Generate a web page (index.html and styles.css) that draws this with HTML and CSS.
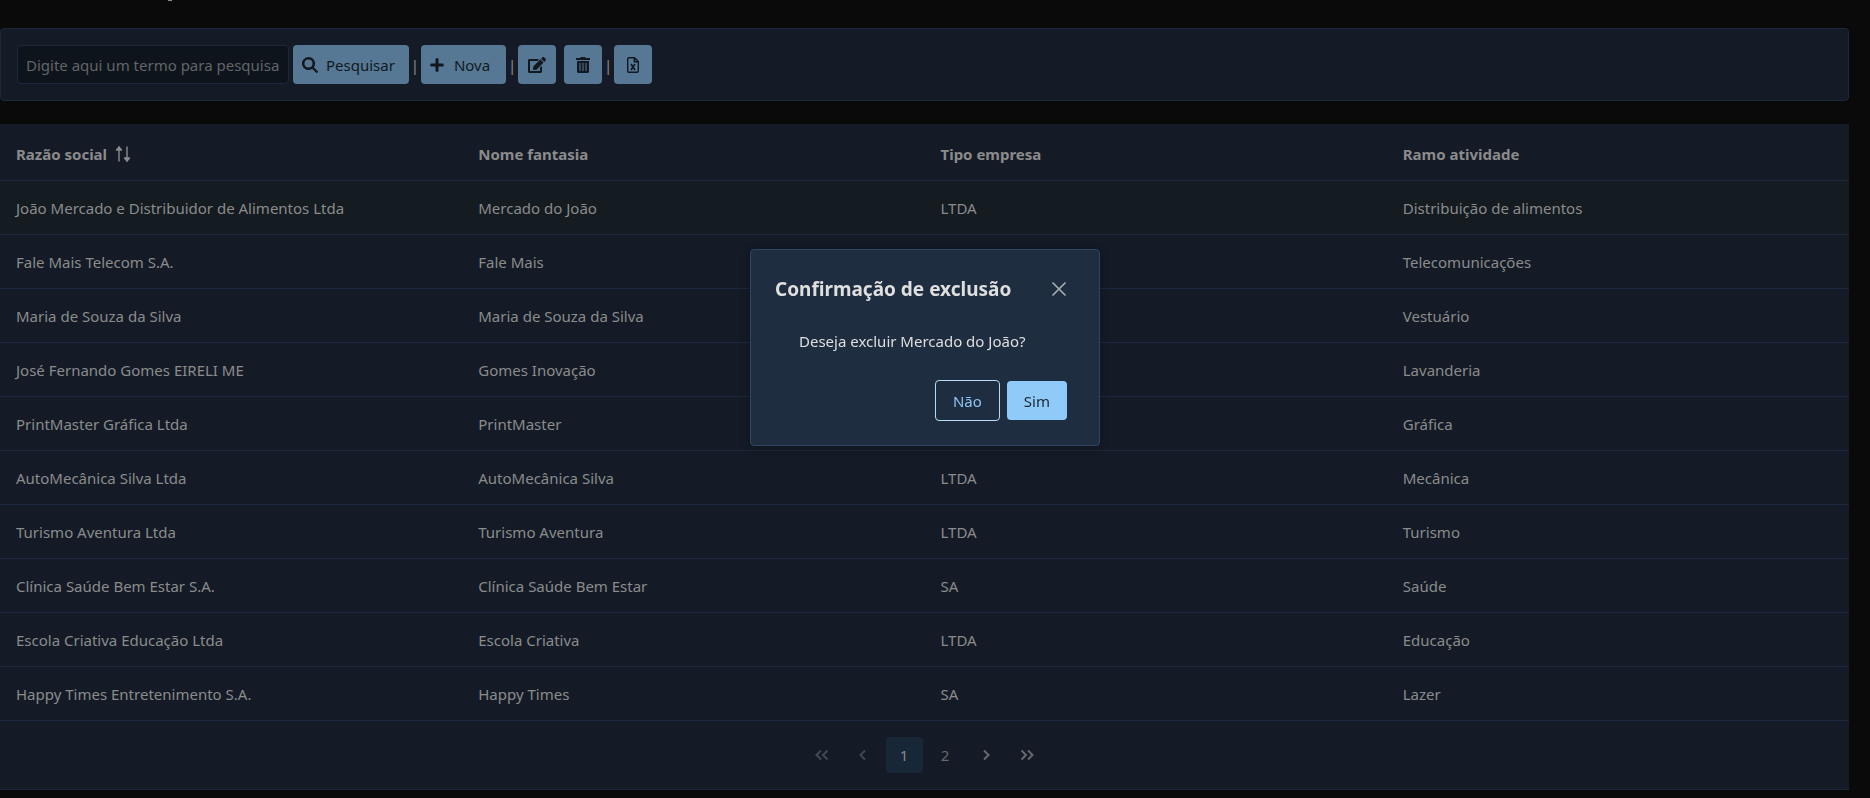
FILE: index.html
```html
<!DOCTYPE html>
<html lang="pt-BR">
<head>
<meta charset="utf-8">
<title>Empresas</title>
<link rel="stylesheet" href="styles.css">
</head>
<body>
<main class="page">
  <div class="title-tail" aria-hidden="true"></div>
  <div class="toolbar" role="toolbar">
    <input class="search" type="text" aria-label="Termo para pesquisa" placeholder="Digite aqui um termo para pesquisa">
    <button class="btn btn-text" type="button"><svg width="16" height="16" viewBox="0 0 16 16"><path fill-rule="evenodd" d="M6.500 0a6.500 6.500 0 0 1 5.300 10.300l4 4q.4.500 0 1l-.6.500q-.5.400-1 0l-4-4A6.500 6.500 0 1 1 6.500 0zM6.500 2.500a4 4 0 1 0 0 8 4 4 0 0 0 0-8z"/></svg><span>Pesquisar</span></button>
    <span class="sep">|</span>
    <button class="btn btn-text" type="button"><svg width="14" height="16" viewBox="0 0 14 16"><path d="M5.500 2.200q0-.9.900-.9h1.200q.9 0 .9.900v4.300h4.300q.9 0 .9.900v1.200q0 .9-.9.900H8.500v4.300q0 .9-.9.900H6.400q-.9 0-.9-.9V9.500H1.200q-.9 0-.9-.9V7.400q0-.9.900-.9h4.300z"/></svg><span class="wide">Nova</span></button>
    <span class="sep">|</span>
    <div class="pair">
      <button class="btn btn-icon" type="button" aria-label="Editar"><svg width="18" height="16" viewBox="0 0 576 512"><path d="M402.600 83.200l90.200 90.200c3.800 3.800 3.800 10 0 13.800L274.400 405.600l-92.800 10.300c-12.400 1.400-22.900-9.100-21.500-21.500l10.300-92.800L388.800 83.200c3.800-3.800 10-3.800 13.800 0zm162-22.900l-48.800-48.800c-15.200-15.200-39.900-15.200-55.200 0l-35.400 35.400c-3.800 3.800-3.800 10 0 13.800l90.200 90.200c3.800 3.800 10 3.800 13.800 0l35.400-35.400c15.200-15.300 15.200-40 0-55.200zM384 346.200V448H64V128h229.800c3.200 0 6.200-1.300 8.500-3.500l40-40c7.600-7.600 2.200-20.500-8.500-20.500H48C21.500 64 0 85.500 0 112v352c0 26.500 21.500 48 48 48h352c26.500 0 48-21.500 48-48V306.200c0-10.700-12.900-16-20.500-8.500l-40 40c-2.200 2.300-3.500 5.300-3.500 8.500z"/></svg></button>
      <button class="btn btn-icon" type="button" aria-label="Excluir"><svg width="14" height="16" viewBox="0 0 14 16"><path fill-rule="evenodd" d="M5 0h4l1 1h4v2H0V1h4zM1 4h12v10.500q0 1.500-1.500 1.500h-9Q1 16 1 14.500zM3.500 6v8h1V6zM6.500 6v8h1V6zM9.500 6v8h1V6z"/></svg></button>
    </div>
    <span class="sep">|</span>
    <button class="btn btn-icon" type="button" aria-label="Exportar para Excel"><svg width="12" height="16" viewBox="0 0 12 16" fill="none" stroke="currentColor"><path stroke-width="1.400" d="M2 .7H7.500L11.300 4.500V14q0 1.300-1.300 1.300H2Q.7 15.300.7 14V2Q.7.7 2 .7zM7.300 1v3.700H11"/><path stroke-width="1.600" d="M4 7l4 6M8 7l-4 6"/></svg></button>
  </div>

  <table class="grid">
    <thead><tr>
      <th aria-sort="none"><span class="sortable">Razão social <svg width="16" height="16" viewBox="0 0 16 16" fill="none" stroke="currentColor" stroke-width="1.400" stroke-linecap="round" stroke-linejoin="round"><path d="M4 15V1M12 1v14"/><path fill="currentColor" d="M1.500 4L4 1l2.500 3zM9.500 12l2.500 3 2.500-3z"/></svg></span></th>
      <th>Nome fantasia</th><th>Tipo empresa</th><th>Ramo atividade</th>
    </tr></thead>
    <tbody>
      <tr class="selected"><td>João Mercado e Distribuidor de Alimentos Ltda</td><td>Mercado do João</td><td>LTDA</td><td>Distribuição de alimentos</td></tr>
      <tr><td>Fale Mais Telecom S.A.</td><td>Fale Mais</td><td></td><td>Telecomunicações</td></tr>
      <tr><td>Maria de Souza da Silva</td><td>Maria de Souza da Silva</td><td></td><td>Vestuário</td></tr>
      <tr><td>José Fernando Gomes EIRELI ME</td><td>Gomes Inovação</td><td></td><td>Lavanderia</td></tr>
      <tr><td>PrintMaster Gráfica Ltda</td><td>PrintMaster</td><td></td><td>Gráfica</td></tr>
      <tr><td>AutoMecânica Silva Ltda</td><td>AutoMecânica Silva</td><td>LTDA</td><td>Mecânica</td></tr>
      <tr><td>Turismo Aventura Ltda</td><td>Turismo Aventura</td><td>LTDA</td><td>Turismo</td></tr>
      <tr><td>Clínica Saúde Bem Estar S.A.</td><td>Clínica Saúde Bem Estar</td><td>SA</td><td>Saúde</td></tr>
      <tr><td>Escola Criativa Educação Ltda</td><td>Escola Criativa</td><td>LTDA</td><td>Educação</td></tr>
      <tr><td>Happy Times Entretenimento S.A.</td><td>Happy Times</td><td>SA</td><td>Lazer</td></tr>
    </tbody>
  </table>

  <nav class="pager" aria-label="Paginação">
    <button class="page-btn" type="button" disabled aria-label="Primeira página"><svg width="14" height="12" viewBox="0 0 14 12"><path d="M6 1.500L1.500 6 6 10.500M12.500 1.500L8 6l4.500 4.500"/></svg></button>
    <button class="page-btn" type="button" disabled aria-label="Página anterior"><svg width="8" height="12" viewBox="0 0 8 12"><path d="M6 1.500L1.500 6 6 10.500"/></svg></button>
    <button class="page-btn current" type="button" aria-current="page">1</button>
    <button class="page-btn" type="button">2</button>
    <button class="page-btn" type="button" aria-label="Próxima página"><svg width="8" height="12" viewBox="0 0 8 12"><path d="M2 1.500L6.500 6 2 10.500"/></svg></button>
    <button class="page-btn" type="button" aria-label="Última página"><svg width="14" height="12" viewBox="0 0 14 12"><path d="M1.500 1.500L6 6l-4.500 4.500M8 1.500L12.500 6 8 10.500"/></svg></button>
  </nav>
</main>

<div class="overlay">
  <section class="dialog" role="dialog" aria-modal="true" aria-labelledby="dialog-title">
    <header class="dialog-head">
      <h2 id="dialog-title">Confirmação de exclusão</h2>
      <button class="close" type="button" aria-label="Fechar"><svg width="14" height="14" viewBox="0 0 14 14" fill="none" stroke="currentColor" stroke-width="1.700" stroke-linecap="round"><path d="M1 1l12 12M13 1L1 13"/></svg></button>
    </header>
    <p class="message">Deseja excluir Mercado do João?</p>
    <footer class="dialog-foot">
      <button class="answer outlined" type="button">Não</button>
      <button class="answer filled" type="button">Sim</button>
    </footer>
  </section>
</div>
</body>
</html>
```
FILE: styles.css
```css
* { box-sizing: border-box; }

body {
  margin: 0;
  background: #0a0a0a;
  color: #8b8b8c;
  font: 15px/22px "Segoe UI", "Noto Sans", "Open Sans", sans-serif;
}

button, input { font: inherit; margin: 0; }
svg { display: block; flex: none; }

.page { padding-right: 21px; }

.title-tail {
  width: 4px;
  height: 1px;
  margin: 0 0 27px 168px;
  background: #8b8b8c;
}

.toolbar {
  display: flex;
  align-items: center;
  gap: 4px;
  padding: 16px;
  background: #141b26;
  border: 1px solid #1c283b;
  border-radius: 4px;
}

.search {
  width: 272px;
  height: 39px;
  padding: 0 8px;
  background: #0e141b;
  border: 1px solid #1c283b;
  border-radius: 4px;
  color: #8b8b8c;
}
.search::placeholder { color: #626568; opacity: 1; }

.btn {
  display: flex;
  align-items: center;
  height: 39px;
  padding: 0;
  background: #567894;
  border: 0;
  border-radius: 4px;
  color: #11181f;
}
.btn svg { fill: currentColor; }
.btn svg[fill="none"] { fill: none; }
.btn-text { gap: 8px; padding: 0 14px 0 9px; }
.btn-text .wide { padding: 0 2px; }
.btn-icon { justify-content: center; width: 38px; }
.pair { display: flex; gap: 8px; }
.sep { width: 4px; display: flex; justify-content: center; }

.grid {
  width: 100%;
  margin-top: 23px;
  table-layout: fixed;
  border-collapse: separate;
  border-spacing: 0;
  background: #141b26;
}
.grid th, .grid td {
  height: 54px;
  padding: 0 16px;
  border-bottom: 1px solid #1c283b;
  text-align: left;
}
.grid th { height: 57px; padding-top: 4px; font-weight: 700; }
.grid .selected td { background: #141b21; }
.sortable { display: flex; align-items: center; gap: 8px; }

.pager {
  display: flex;
  justify-content: center;
  gap: 4px;
  padding: 16px;
  background: #141b26;
  border-bottom: 1px solid #1c283b;
}
.page-btn {
  display: flex;
  align-items: center;
  justify-content: center;
  width: 37px;
  height: 36px;
  padding: 0;
  background: none;
  border: 0;
  border-radius: 4px;
  color: #66696c;
}
.page-btn:disabled { color: #42484f; }
.page-btn.current { background: #182737; color: #858a8f; }
.page-btn svg { fill: none; stroke: currentColor; stroke-width: 2; }

.overlay {
  position: fixed;
  inset: 0;
  display: flex;
  align-items: center;
  justify-content: center;
  padding: 0 20px 103px 0;
}
.dialog {
  width: 350px;
  padding: 24px 32px 24px 24px;
  background: #1f2d40;
  border: 1px solid #304562;
  border-radius: 4px;
  box-shadow: 0 1px 8px rgba(0, 0, 0, 0.3);
  color: #dfdfe0;
}
.dialog-head { display: flex; align-items: center; justify-content: space-between; }
.dialog-head h2 { margin: 0; font-size: 19px; line-height: 30px; font-weight: 700; }
.close { padding: 1px; background: none; border: 0; color: #a6abb2; }
.message { margin: 26px 24px 28px; }
.dialog-foot { display: flex; align-items: center; justify-content: flex-end; gap: 7px; }
.answer { height: 39px; padding: 0 17px; border: 0; border-radius: 4px; }
.outlined { height: 41px; background: none; border: 1px solid #b5dcfb; color: #8dc3f2; }
.filled { background: #90caf9; color: #1c2733; }
```
